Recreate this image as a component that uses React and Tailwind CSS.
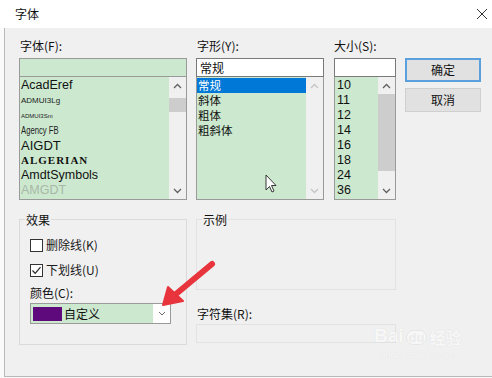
import React from "react";

const cjk = { fontFamily: '"Noto Sans CJK SC", "Liberation Sans", sans-serif' };
const latin = { fontFamily: '"Liberation Sans", "Noto Sans CJK SC", sans-serif' };

function Chevron({ up, disabled }) {
    return (
        <svg width="9" height="6" viewBox="0 0 9 6">
            <path d={up ? "M1 5 L4.5 1.5 L8 5" : "M1 1 L4.5 4.5 L8 1"} fill="none" stroke={disabled ? "#c4c4c4" : "#606060"} strokeWidth="1.3" />
        </svg>
    );
}

function ScrollBar({ thumbTop, thumbHeight, disabled }) {
    return (
        <div className="w-[17px] h-full bg-[#f0f0f0] flex flex-col items-center">
            <div className="h-[17px] w-full flex items-center justify-center"><Chevron up disabled={disabled} /></div>
            <div className="flex-1 w-full relative">
                {thumbHeight > 0 && <div className="absolute left-0 right-0 bg-[#cdcdcd]" style={{ top: thumbTop, height: thumbHeight }} />}
            </div>
            <div className="h-[17px] w-full flex items-center justify-center"><Chevron disabled={disabled} /></div>
        </div>
    );
}

function Check({ checked, label }) {
    return (
        <div className="h-[16px] flex items-center gap-[3px]">
            <div className="w-[13px] h-[13px] border border-[#333] bg-white flex items-center justify-center">
                {checked && (
                    <svg width="11" height="11" viewBox="0 0 11 11">
                        <path d="M1.5 5.5 L4.2 8.3 L9.5 2.2" fill="none" stroke="#222" strokeWidth="1.2" />
                    </svg>
                )}
            </div>
            <span className="text-[12px] text-[#1a1a1a] leading-none" style={cjk}>{label}</span>
        </div>
    );
}

export default function App() {
    const fonts = [
        { t: "AcadEref", c: "text-[12.5px] text-[#111]" },
        { t: "ADMUI3Lg", c: "text-[8px] text-[#222]" },
        { t: "ADMUI3Sm", c: "text-[6px] text-[#222]" },
        { t: "Agency FB", c: "text-[11px] text-[#222] scale-x-[0.7] origin-left inline-block" },
        { t: "AIGDT", c: "text-[13px] text-[#111]" },
        { t: "ALGERIAN", c: "text-[11px] font-bold text-[#111] tracking-[1px]", serif: true },
        { t: "AmdtSymbols", c: "text-[12.5px] text-[#111]" },
        { t: "AMGDT", c: "text-[12.5px] text-[#a8b8a8]" },
    ];
    const sizes = ["10", "11", "12", "14", "16", "18", "24", "36"];

    return (
        <div className="w-[492px] h-[378px] bg-[#fafafa] relative overflow-hidden">
            <div className="h-[28px] bg-white flex items-center justify-between pl-[15px] pr-[2px]">
                <span className="text-[12px] text-[#111]" style={cjk}>字体</span>
                <svg width="14" height="14" viewBox="0 0 14 14" className="mr-[1px]">
                    <path d="M2 2 L12 12 M12 2 L2 12" stroke="#333" strokeWidth="1" />
                </svg>
            </div>
            <div className="ml-[4px] border-l border-b border-[#b8b8b8] bg-[#f0f0f0] h-[349px] pl-[14px] pt-[10px]">
                <div className="flex">
                    <div className="w-[168px] flex flex-col">
                        <div className="h-[16px] mb-[4px] text-[12px] text-[#111] leading-[16px] pl-[1px]" style={cjk}>字体(F):</div>
                        <div className="h-[19px] border border-[#9a9a9a] bg-[#cce8cf]" />
                        <div className="h-[123px] border border-t-0 border-[#9a9a9a] bg-[#cce8cf] flex">
                            <div className="flex-1 pt-[1px] overflow-hidden">
                                {fonts.map((f, i) => (
                                    <div key={i} className="h-[15px] flex items-center pl-[1px] whitespace-nowrap leading-none">
                                        <span className={f.c} style={f.serif ? { fontFamily: '"Liberation Serif", serif' } : latin}>{f.t}</span>
                                    </div>
                                ))}
                            </div>
                            <ScrollBar thumbTop={4} thumbHeight={14} />
                        </div>
                    </div>
                    <div className="w-[128px] flex flex-col ml-[9px]">
                        <div className="h-[16px] mb-[4px] text-[12px] text-[#111] leading-[16px] pl-[1px]" style={cjk}>字形(Y):</div>
                        <div className="h-[19px] border border-[#7a7a7a] bg-white flex items-center pl-[3px] text-[12px] text-[#111]" style={cjk}>常规</div>
                        <div className="h-[123px] border border-t-0 border-[#9a9a9a] bg-[#cce8cf] flex">
                            <div className="flex-1 pt-[1px]">
                                {["常规", "斜体", "粗体", "粗斜体"].map((s, i) => (
                                    <div key={i} className={"h-[15px] flex items-center pl-[1px] overflow-hidden " + (i === 0 ? "bg-[#0078d7] text-white" : "text-[#111]")}>
                                        <span className="text-[11.5px] leading-[13px]" style={cjk}>{s}</span>
                                    </div>
                                ))}
                            </div>
                            <ScrollBar thumbTop={0} thumbHeight={0} disabled />
                        </div>
                    </div>
                    <div className="w-[62px] flex flex-col ml-[10px]">
                        <div className="h-[16px] mb-[4px] text-[12px] text-[#111] leading-[16px]" style={cjk}>大小(S):</div>
                        <div className="h-[19px] border border-[#7a7a7a] bg-white" />
                        <div className="h-[123px] border border-t-0 border-[#9a9a9a] bg-[#cce8cf] flex">
                            <div className="flex-1 pt-[1px]">
                                {sizes.map((s) => (
                                    <div key={s} className="h-[15px] flex items-center pl-[2px] text-[12.5px] text-[#111] leading-none" style={latin}>{s}</div>
                                ))}
                            </div>
                            <ScrollBar thumbTop={0} thumbHeight={77} />
                        </div>
                    </div>
                    <div className="w-[76px] ml-[9px] pt-[20px] flex flex-col gap-[6px]">
                        <div className="h-[24px] border-2 border-[#5aa0dc] bg-[#e1e1e1] flex items-center justify-center text-[12px] text-[#111]" style={cjk}>确定</div>
                        <div className="h-[24px] border border-[#cfcfcf] bg-[#e1e1e1] flex items-center justify-center text-[12px] text-[#111]" style={cjk}>取消</div>
                    </div>
                </div>

                <div className="flex mt-[19px]">
                    <div className="w-[168px] h-[126px] border border-[#dadada] relative pl-[10px] pt-[17px] flex flex-col">
                        <span className="absolute -top-[9px] left-[5px] px-[1px] bg-[#f0f0f0] text-[12px] text-[#111]" style={cjk}>效果</span>
                        <Check label="删除线(K)" />
                        <div className="h-[9px]" />
                        <Check checked label="下划线(U)" />
                        <div className="h-[7px]" />
                        <div className="h-[16px] text-[12px] text-[#111] leading-[16px]" style={cjk}>颜色(C):</div>
                        <div className="mt-[2px] w-[141px] h-[21px] border border-[#9a9a9a] bg-white flex">
                            <div className="flex-1 bg-[#cce8cf] flex items-center pl-[2px] gap-[2px]">
                                <div className="w-[29px] h-[14px] bg-[#5e0a7c]" />
                                <span className="text-[12px] text-[#111] leading-none" style={cjk}>自定义</span>
                            </div>
                            <div className="w-[17px] flex items-center justify-center">
                                <svg width="8" height="5" viewBox="0 0 8 5"><path d="M1 1 L4 4 L7 1" fill="none" stroke="#707070" strokeWidth="1" /></svg>
                            </div>
                        </div>
                    </div>
                    <div className="w-[200px] ml-[9px] flex flex-col">
                        <div className="h-[71px] border border-[#e2e2e2] relative">
                            <span className="absolute -top-[9px] left-[5px] px-[1px] bg-[#f0f0f0] text-[12px] text-[#111]" style={cjk}>示例</span>
                        </div>
                        <div className="mt-[16px] h-[16px] text-[12px] text-[#111] leading-[16px] pl-[1px]" style={cjk}>字符集(R):</div>
                        <div className="mt-[2px] h-[19px] border border-[#e2e2e2] bg-[#f0f0f0]" />
                    </div>
                </div>
            </div>

            <svg className="absolute left-0 top-0" width="492" height="378" viewBox="0 0 492 378">
                <path d="M212 264 L176 294" stroke="#e8343c" strokeWidth="6" strokeLinecap="round" />
                <path d="M163 305 L168 287 L183 301 Z" fill="#e8343c" stroke="#e8343c" strokeWidth="2" strokeLinejoin="round" />
                <path d="M266 175 L266 190 L269.5 186.5 L272 192 L274 191 L271.5 185.5 L276 185.5 Z" fill="#fff" stroke="#222" strokeWidth="0.9" strokeLinejoin="round" />
            </svg>

            <div className="absolute left-[374px] top-[326px] flex flex-col items-center opacity-50" style={latin}>
                <div className="flex items-end gap-[2px] text-[19px] font-bold text-white leading-none [text-shadow:0_0_1px_#c8c8c8]">
                    <span>Bai</span>
                    <span className="text-[13px] rounded-full bg-white text-[#e8e8e8] px-[2px] [text-shadow:none] border border-[#dcdcdc]">du</span>
                    <span className="text-[16px]" style={cjk}>经验</span>
                </div>
                <div className="text-[9px] text-white leading-none mt-[6px] [text-shadow:0_0_1px_#cccccc]">jingyan.baidu.com</div>
            </div>
        </div>
    );
}
